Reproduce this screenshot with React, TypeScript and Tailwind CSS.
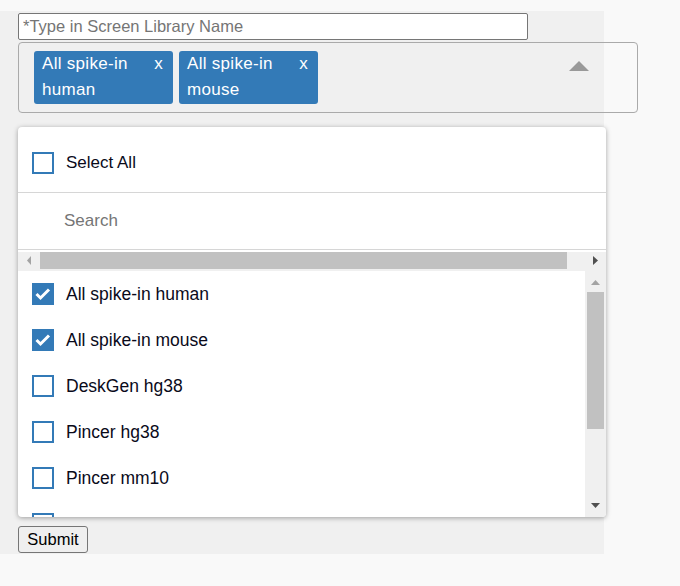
import React, { useState } from 'react';

type Lib = { name: string; checked: boolean };

const libs: Lib[] = [
  { name: 'All spike-in human', checked: true },
  { name: 'All spike-in mouse', checked: true },
  { name: 'DeskGen hg38', checked: false },
  { name: 'Pincer hg38', checked: false },
  { name: 'Pincer mm10', checked: false },
  { name: 'Exiled hg19', checked: false },
];

const Box: React.FC<{ checked: boolean }> = ({ checked }) =>
  checked ? (
    <span className="flex h-[22px] w-[22px] shrink-0 items-center justify-center bg-[#337ab7]">
      <svg width="22" height="22" viewBox="0 0 22 22">
        <path d="M4.5 11 L8.5 15 L17 6.5" fill="none" stroke="#fff" strokeWidth="3" />
      </svg>
    </span>
  ) : (
    <span className="block h-[22px] w-[22px] shrink-0 border-2 border-[#337ab7] bg-white" />
  );

const Tag: React.FC<{ label: string }> = ({ label }) => (
  <div className="flex w-[139px] rounded-[3px] bg-[#337ab7] pb-[1px] pl-[8px] pr-[10px] text-[17px] leading-[26px] tracking-[0.3px] text-white">
    <span className="flex-1 pr-[10px]">{label}</span>
    <span>x</span>
  </div>
);

export default function App() {
  const [name, setName] = useState('');
  const [search, setSearch] = useState('');

  return (
    <div className="min-h-[586px] bg-[#f9f9f9] pt-[11px] font-['Liberation_Sans',Arial,sans-serif] text-black">
      <div className="h-[543px] w-[604px] bg-[#f0f0f0] pl-[18px] pt-[2px]">
        <input
          value={name}
          onChange={(e) => setName(e.target.value)}
          placeholder="*Type in Screen Library Name"
          className="block h-[27px] w-[510px] rounded-[2px] border border-[#767676] bg-white px-[4px] text-[16.5px] placeholder:text-[#757575] focus:outline-none"
        />

        <div className="mt-[2px] flex h-[71px] w-[620px] items-start rounded-[4px] border border-[#aaaaaa] pl-[15px] pr-[48px] pt-[8px]">
          <div className="flex flex-1 gap-[6px]">
            <Tag label="All spike-in human" />
            <Tag label="All spike-in mouse" />
          </div>
          <svg width="20" height="10" viewBox="0 0 20 10" className="mt-[10px]">
            <polygon points="0,10 10,0 20,10" fill="#999" />
          </svg>
        </div>

        <div className="mt-[14px] flex h-[390px] w-[588px] flex-col overflow-hidden rounded-[4px] bg-white shadow-[0_1px_5px_rgba(0,0,0,0.35)]">
          <div className="flex h-[65px] items-start gap-[12px] pl-[14px] pt-[25px]">
            <Box checked={false} />
            <span className="text-[17px] leading-[22px] text-[#0a0a1a]">Select All</span>
          </div>
          <div className="h-px bg-[#d6d6d6]" />
          <div className="flex h-[56px] items-center">
            <input
              value={search}
              onChange={(e) => setSearch(e.target.value)}
              placeholder="Search"
              className="w-full bg-transparent pl-[46px] text-[17px] placeholder:text-[#757575] focus:outline-none"
            />
          </div>
          <div className="h-px bg-[#d6d6d6]" />
          <div className="h-[2px]" />
          <div className="flex h-[19px] items-start bg-[#f0f0f0]">
            <div className="flex h-[17px] w-[22px] items-center justify-center">
              <svg width="4" height="9" viewBox="0 0 4 9">
                <polygon points="4,0 0,4.5 4,9" fill="#a3a3a3" />
              </svg>
            </div>
            <div className="h-[17px] w-[527px] bg-[#c1c1c1]" />
            <div className="flex h-[17px] flex-1 items-center justify-end pr-[8px]">
              <svg width="5" height="9" viewBox="0 0 5 9">
                <polygon points="0,0 5,4.5 0,9" fill="#505050" />
              </svg>
            </div>
          </div>
          <div className="flex min-h-0 flex-1">
            <div className="flex-1 overflow-hidden">
              {libs.map((l) => (
                <div key={l.name} className="flex h-[46px] items-center gap-[12px] pl-[14px]">
                  <Box checked={l.checked} />
                  <span className="text-[17.5px] leading-[22px] text-[#0a0a1a]">{l.name}</span>
                </div>
              ))}
            </div>
            <div className="relative w-[21px] bg-[#f0f0f0]">
              <svg width="9" height="5" viewBox="0 0 9 5" className="absolute left-[6px] top-[9px]">
                <polygon points="0,5 4.5,0 9,5" fill="#a3a3a3" />
              </svg>
              <div className="absolute left-[2px] top-[21px] h-[137px] w-[17px] bg-[#c1c1c1]" />
              <svg width="9" height="5" viewBox="0 0 9 5" className="absolute left-[6px] top-[232px]">
                <polygon points="0,0 9,0 4.5,5" fill="#505050" />
              </svg>
            </div>
          </div>
        </div>

        <button className="mt-[9px] h-[27px] w-[70px] rounded-[3px] border border-[#767676] bg-[#efefef] text-[16.5px] leading-none text-black">
          Submit
        </button>
      </div>
    </div>
  );
}
